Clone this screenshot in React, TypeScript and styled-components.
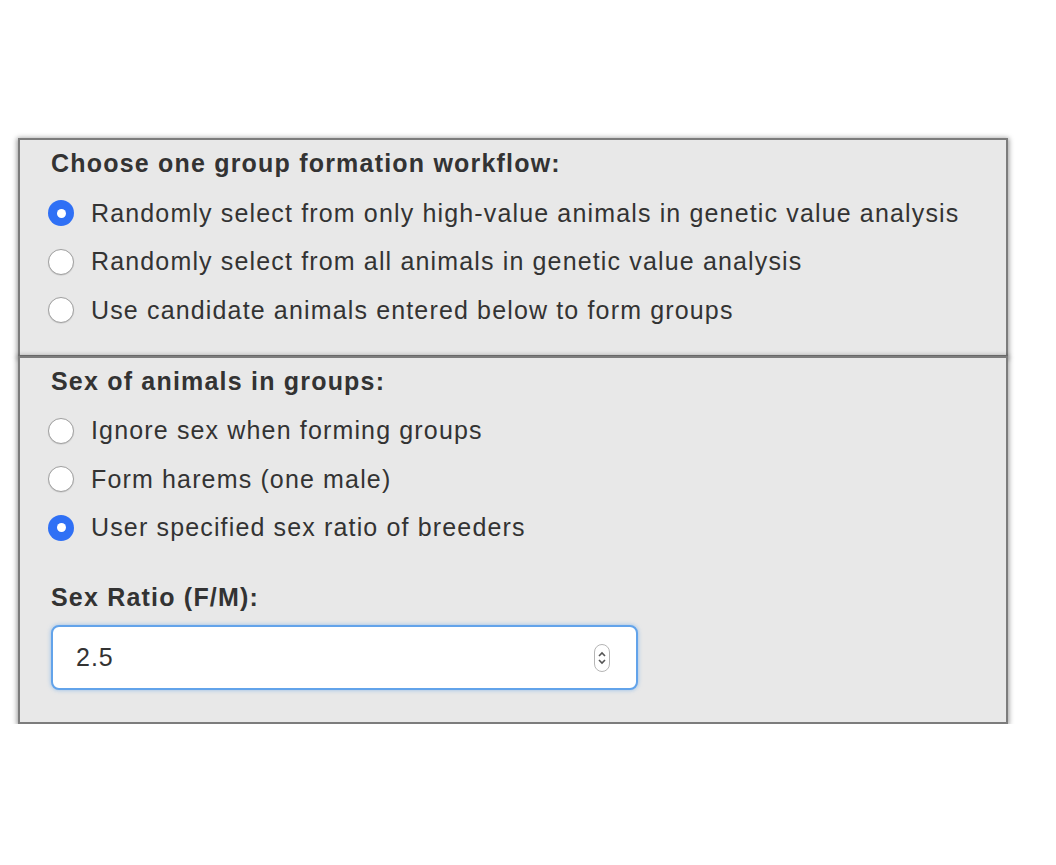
import React from "react";
import styled, { createGlobalStyle } from "styled-components";

const Global = createGlobalStyle`
  html, body { margin: 0; padding: 0; background: #ffffff; }
  body { font-family: "Liberation Sans", Arial, Helvetica, sans-serif; color: #333333; }
`;

const Page = styled.div`
  padding: 138px 0 0 18px;
  width: 990px;
`;

const Section = styled.div<{ $last?: boolean }>`
  box-sizing: border-box;
  background: #e8e8e8;
  border: 2px solid #7c7c7c;
  box-shadow: 0 1px 5px 1px rgba(0, 0, 0, 0.4);
  padding: ${(p) => (p.$last ? "10px 31px 32px 31px" : "10px 31px 20px 31px")};
  margin-top: ${(p) => (p.$last ? "-1px" : "0")};
  position: relative;
`;

const Heading = styled.div`
  font-weight: bold;
  font-size: 25px;
  letter-spacing: 1.2px;
  line-height: 26px;
  margin-bottom: 13px;
`;

const Option = styled.label`
  display: flex;
  align-items: center;
  gap: 17px;
  height: 48.5px;
  font-size: 25px;
  letter-spacing: 1.15px;
  margin-left: -3px;
`;

const Radio = styled.span<{ $checked?: boolean }>`
  box-sizing: border-box;
  width: 26px;
  height: 26px;
  border-radius: 50%;
  flex: none;
  background: ${(p) => (p.$checked ? "#2f70f5" : "#ffffff")};
  border: ${(p) => (p.$checked ? "none" : "1.5px solid #a0a0a0")};
  box-shadow: ${(p) => (p.$checked ? "none" : "0 0.5px 1px rgba(0,0,0,0.15)")};
  display: flex;
  align-items: center;
  justify-content: center;
  &::after {
    content: "";
    display: ${(p) => (p.$checked ? "block" : "none")};
    width: 9px;
    height: 9px;
    border-radius: 50%;
    background: #ffffff;
  }
`;

const FieldLabel = styled.div`
  font-weight: bold;
  font-size: 25px;
  letter-spacing: 1.2px;
  line-height: 26px;
  margin-top: 32px;
`;

const InputBox = styled.div`
  box-sizing: border-box;
  margin-top: 15px;
  width: 587px;
  height: 65px;
  background: #ffffff;
  border: 2px solid #62a3ea;
  border-radius: 8px;
  box-shadow: 0 0 4px rgba(90, 160, 235, 0.6);
  display: flex;
  align-items: center;
  justify-content: space-between;
  padding: 0 26px 0 23px;
  font-size: 25px;
  letter-spacing: 1px;
`;

const Spinner = styled.span`
  box-sizing: border-box;
  width: 16px;
  height: 28px;
  border: 1.5px solid #b5b5b5;
  border-radius: 8px;
  display: flex;
  align-items: center;
  justify-content: center;
`;

const workflows = [
  { text: "Randomly select from only high-value animals in genetic value analysis", checked: true },
  { text: "Randomly select from all animals in genetic value analysis", checked: false },
  { text: "Use candidate animals entered below to form groups", checked: false },
];

const sexOptions = [
  { text: "Ignore sex when forming groups", checked: false },
  { text: "Form harems (one male)", checked: false },
  { text: "User specified sex ratio of breeders", checked: true },
];

export default function App() {
  return (
    <>
      <Global />
      <Page>
        <Section>
          <Heading>Choose one group formation workflow:</Heading>
          {workflows.map((o) => (
            <Option key={o.text}>
              <Radio $checked={o.checked} />
              {o.text}
            </Option>
          ))}
        </Section>
        <Section $last>
          <Heading>Sex of animals in groups:</Heading>
          {sexOptions.map((o) => (
            <Option key={o.text}>
              <Radio $checked={o.checked} />
              {o.text}
            </Option>
          ))}
          <FieldLabel>Sex Ratio (F/M):</FieldLabel>
          <InputBox>
            <span>2.5</span>
            <Spinner>
              <svg width="10" height="18" viewBox="0 0 10 18">
                <path d="M2 7 L5 4 L8 7" fill="none" stroke="#555" strokeWidth="1.6" />
                <path d="M2 11 L5 14 L8 11" fill="none" stroke="#555" strokeWidth="1.6" />
              </svg>
            </Spinner>
          </InputBox>
        </Section>
      </Page>
    </>
  );
}
